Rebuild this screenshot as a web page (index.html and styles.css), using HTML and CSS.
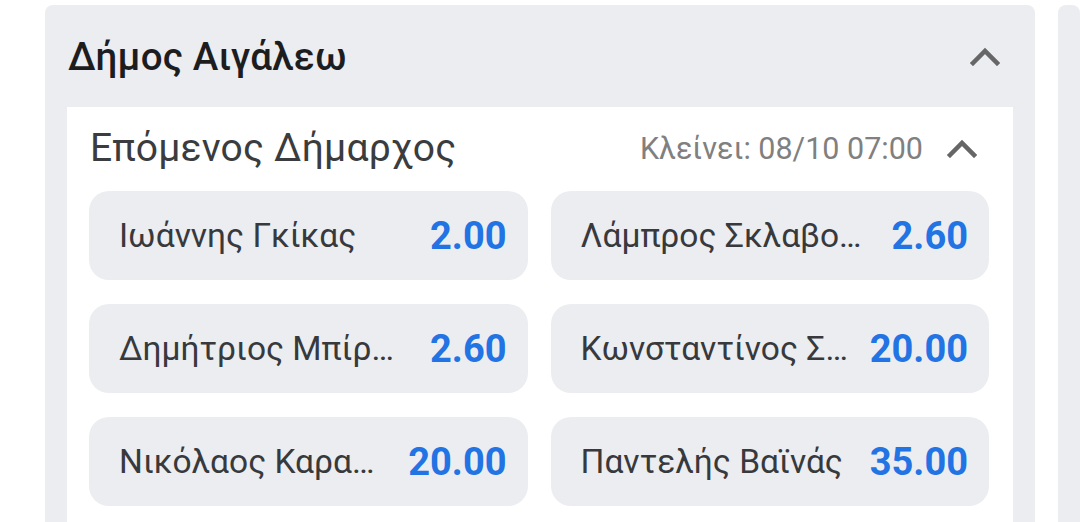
FILE: index.html
```html
<!DOCTYPE html>
<html lang="el">
<head>
<meta charset="utf-8">
<link rel="stylesheet" href="styles.css">
</head>
<body>
<div class="page">
  <section class="card">
    <div class="card-head">
      <h2 class="card-title">Δήμος Αιγάλεω</h2>
      <svg class="chev" viewBox="0 0 30 20" width="30" height="20"><path d="M3 17 L15 5 L27 17" fill="none" stroke="#666" stroke-width="4.5" stroke-linecap="square"/></svg>
    </div>
    <div class="market">
      <div class="market-head">
        <div class="market-title">Επόμενος Δήμαρχος</div>
        <div class="market-meta">
          <span class="closes">Κλείνει: 08/10 07:00</span>
          <svg class="chev" viewBox="0 0 30 20" width="30" height="20"><path d="M3 17 L15 5 L27 17" fill="none" stroke="#666" stroke-width="4.5" stroke-linecap="square"/></svg>
        </div>
      </div>
      <div class="grid">
        <div class="sel"><span class="name">Ιωάννης Γκίκας</span><span class="odd">2.00</span></div>
        <div class="sel"><span class="name">Λάμπρος Σκλαβο…</span><span class="odd">2.60</span></div>
        <div class="sel"><span class="name">Δημήτριος Μπίρ…</span><span class="odd">2.60</span></div>
        <div class="sel"><span class="name">Κωνσταντίνος Σ…</span><span class="odd">20.00</span></div>
        <div class="sel"><span class="name">Νικόλαος Καρα…</span><span class="odd">20.00</span></div>
        <div class="sel"><span class="name">Παντελής Βαϊνάς</span><span class="odd">35.00</span></div>
      </div>
    </div>
  </section>
  <section class="card next"></section>
</div>
</body>
</html>
```
FILE: styles.css
```css
* { box-sizing: border-box; }
html, body {
  margin: 0;
  padding: 0;
  background: #ffffff;
}
body {
  font-family: Roboto, "Noto Sans", "Liberation Sans", sans-serif;
}
.page {
  display: flex;
  gap: 23px;
  padding: 5px 0 0 45px;
  width: 1080px;
  height: 522px;
  overflow: hidden;
}
.card {
  flex: 0 0 990px;
  background: #ebedf0;
  border-radius: 8px 8px 0 0;
  display: flex;
  flex-direction: column;
}
.card.next {
  flex: 0 0 22px;
}
.card-head {
  height: 102px;
  flex: 0 0 102px;
  display: flex;
  align-items: center;
  justify-content: space-between;
  padding: 0 35px 0 23px;
}
.card-title {
  margin: 0;
  font-size: 38.5px;
  font-weight: 500;
  color: #1d1d1f;
  letter-spacing: 0.2px;
}
.chev {
  display: block;
}
.market {
  flex: 1;
  margin: 0 22px;
  background: #ffffff;
  padding: 0 24px 0 22px;
  overflow: hidden;
}
.market-head {
  height: 84px;
  display: flex;
  align-items: center;
  justify-content: space-between;
  padding: 0 12px 2px 1px;
}
.market-title {
  font-size: 39px;
  color: #3a3c40;
  letter-spacing: 0.2px;
}
.market-meta {
  display: flex;
  align-items: center;
  gap: 24px;
}
.closes {
  font-size: 30.5px;
  color: #808080;
}
.grid {
  display: grid;
  grid-template-columns: 1fr 1fr;
  column-gap: 23px;
  row-gap: 24px;
}
.sel {
  height: 89px;
  background: #ebedf0;
  border-radius: 20px;
  display: flex;
  align-items: center;
  gap: 20px;
  padding: 0 21px 0 30px;
}
.name {
  flex: 1;
  min-width: 0;
  font-size: 33.5px;
  color: #37393d;
  white-space: nowrap;
  overflow: hidden;
  text-overflow: ellipsis;
}
.odd {
  font-size: 38px;
  font-weight: 700;
  color: #2273e3;
}
```
